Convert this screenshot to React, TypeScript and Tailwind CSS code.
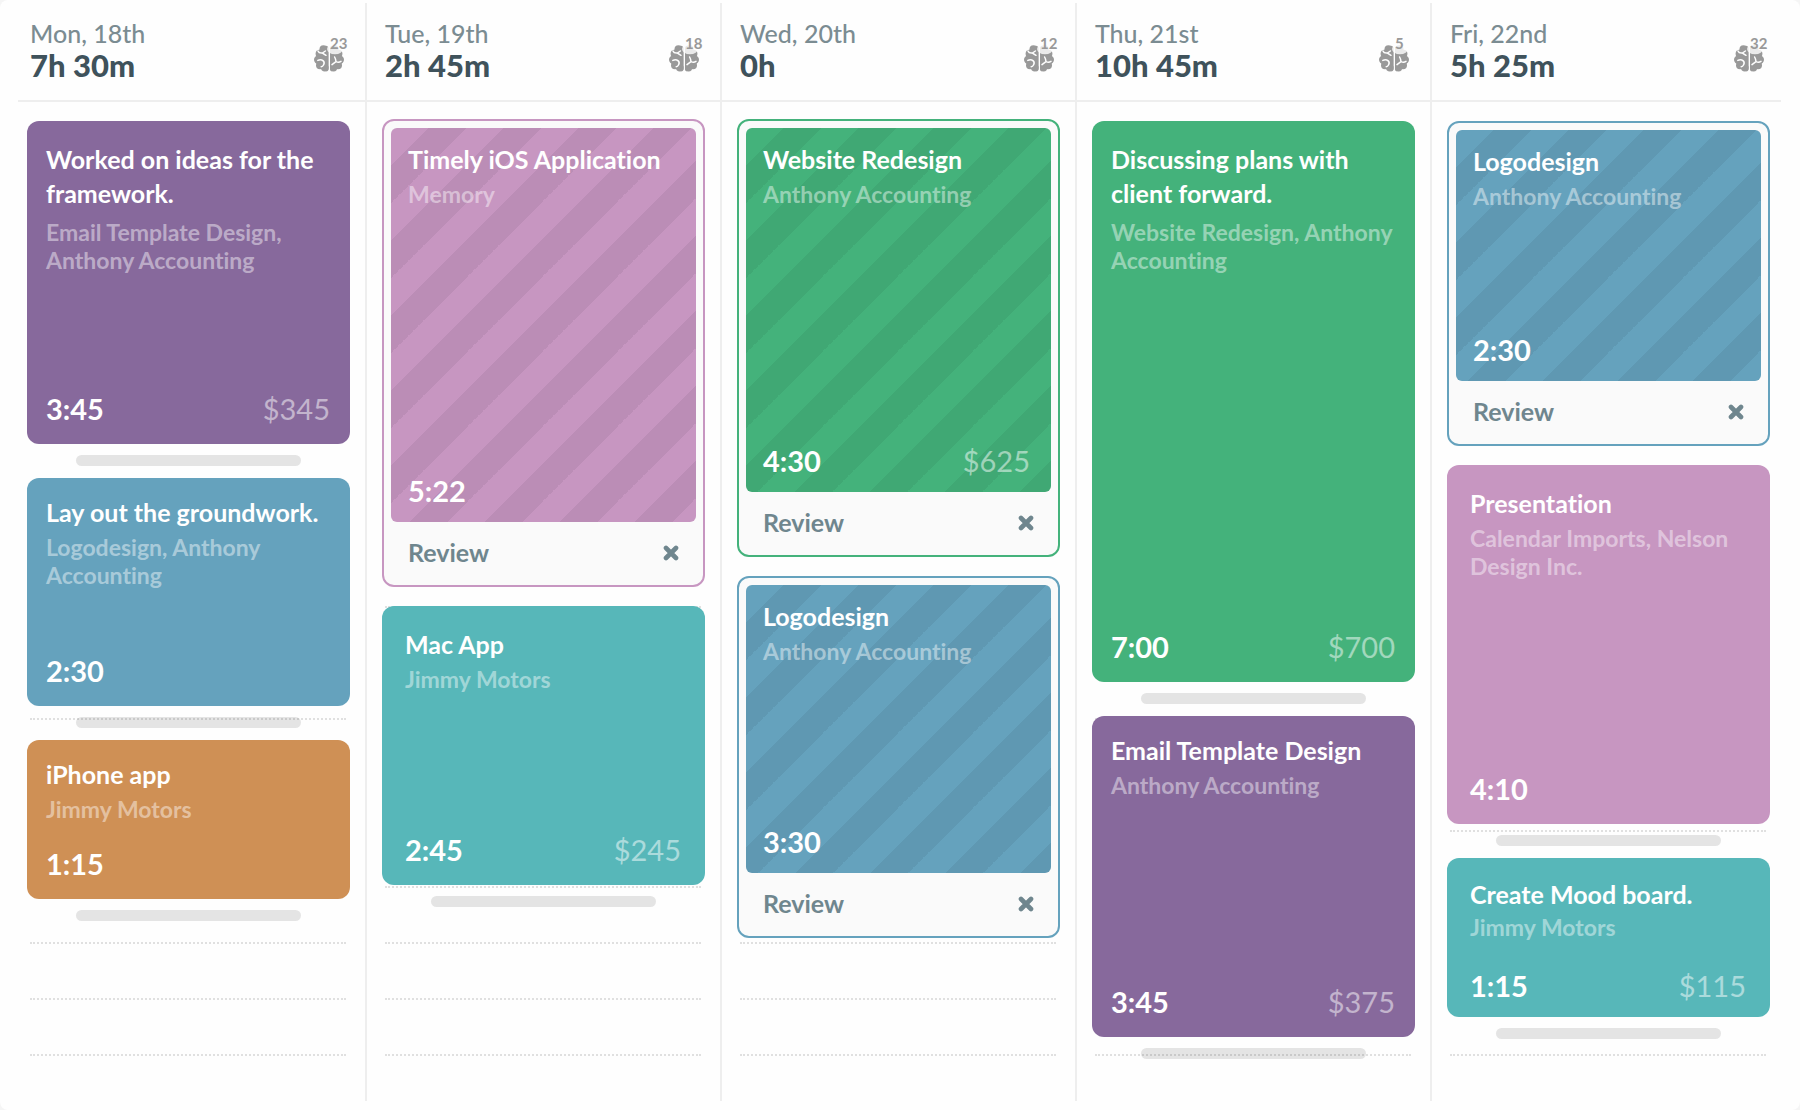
import clsx from "clsx"

type Color = "purple" | "blue" | "orange" | "pink" | "teal" | "green"

interface Entry {
  title: string
  project: string
  time: string
  amount?: string
  color: Color
  height: string
  review?: boolean
  roomy?: boolean
  inset?: boolean
  compact?: boolean
}

interface Day {
  date: string
  total: string
  memories: number
  top: string
  entries: Entry[]
}

const background: Record<Color, string> = {
  purple: "bg-[#87699c]",
  blue: "bg-[#65a2bd]",
  orange: "bg-[#cf9055]",
  pink: "bg-[#c796c1]",
  teal: "bg-[#57b7b9]",
  green: "bg-[#44b27b]",
}

const border: Record<Color, string> = {
  purple: "border-[#87699c]",
  blue: "border-[#65a2bd]",
  orange: "border-[#cf9055]",
  pink: "border-[#c796c1]",
  teal: "border-[#57b7b9]",
  green: "border-[#44b27b]",
}

const stripes =
  "bg-[linear-gradient(135deg,transparent_25%,rgba(0,0,0,0.06)_25%,rgba(0,0,0,0.06)_50%,transparent_50%,transparent_75%,rgba(0,0,0,0.06)_75%)] bg-[length:75px_75px]"

const days: Day[] = [
  {
    date: "Mon, 18th",
    total: "7h 30m",
    memories: 23,
    top: "pt-[19px]",
    entries: [
      {
        title: "Worked on ideas for the framework.",
        project: "Email Template Design, Anthony Accounting",
        time: "3:45",
        amount: "$345",
        color: "purple",
        height: "min-h-[323px]",
        roomy: true,
      },
      {
        title: "Lay out the groundwork.",
        project: "Logodesign, Anthony Accounting",
        time: "2:30",
        color: "blue",
        height: "min-h-[228px]",
      },
      { title: "iPhone app", project: "Jimmy Motors", time: "1:15", color: "orange", height: "min-h-[159px]" },
    ],
  },
  {
    date: "Tue, 19th",
    total: "2h 45m",
    memories: 18,
    top: "pt-[17px]",
    entries: [
      {
        title: "Timely iOS Application",
        project: "Memory",
        time: "5:22",
        color: "pink",
        height: "min-h-[468px]",
        review: true,
      },
      {
        title: "Mac App",
        project: "Jimmy Motors",
        time: "2:45",
        amount: "$245",
        color: "teal",
        height: "min-h-[279px]",
        roomy: true,
        inset: true,
      },
    ],
  },
  {
    date: "Wed, 20th",
    total: "0h",
    memories: 12,
    top: "pt-[17px]",
    entries: [
      {
        title: "Website Redesign",
        project: "Anthony Accounting",
        time: "4:30",
        amount: "$625",
        color: "green",
        height: "min-h-[438px]",
        review: true,
      },
      {
        title: "Logodesign",
        project: "Anthony Accounting",
        time: "3:30",
        color: "blue",
        height: "min-h-[362px]",
        review: true,
      },
    ],
  },
  {
    date: "Thu, 21st",
    total: "10h 45m",
    memories: 5,
    top: "pt-[19px]",
    entries: [
      {
        title: "Discussing plans with client forward.",
        project: "Website Redesign, Anthony Accounting",
        time: "7:00",
        amount: "$700",
        color: "green",
        height: "min-h-[561px]",
        roomy: true,
      },
      {
        title: "Email Template Design",
        project: "Anthony Accounting",
        time: "3:45",
        amount: "$375",
        color: "purple",
        height: "min-h-[321px]",
      },
    ],
  },
  {
    date: "Fri, 22nd",
    total: "5h 25m",
    memories: 32,
    top: "pt-[19px]",
    entries: [
      {
        title: "Logodesign",
        project: "Anthony Accounting",
        time: "2:30",
        color: "blue",
        height: "min-h-[325px]",
        review: true,
      },
      {
        title: "Presentation",
        project: "Calendar Imports, Nelson Design Inc.",
        time: "4:10",
        color: "pink",
        height: "min-h-[359px]",
        roomy: true,
        inset: true,
      },
      {
        title: "Create Mood board.",
        project: "Jimmy Motors",
        time: "1:15",
        amount: "$115",
        color: "teal",
        height: "min-h-[159px]",
        inset: true,
        compact: true,
      },
    ],
  },
]

function BrainIcon() {
  return (
    <svg width="30" height="27" viewBox="0 0 30 27" aria-hidden="true">
      <g fill="#999">
        <path d="M10 1.500C11.500 .2 14.600 .6 14.600 3.500V24C14.600 26.400 11.800 27 10.500 25.500L6 12Z" />
        <circle cx="9.400" cy="4.200" r="3.900" />
        <circle cx="5.600" cy="8.800" r="4" />
        <circle cx="4.200" cy="14.800" r="4.200" />
        <circle cx="6" cy="20.200" r="4" />
        <circle cx="10.800" cy="22.800" r="3.800" />
        <path d="M20 1.500C18.500 .2 16 .6 16 3.500V24C16 26.400 18.200 27 19.500 25.500L24 12Z" />
        <circle cx="20.600" cy="4.200" r="3.900" />
        <circle cx="24.400" cy="8.800" r="4" />
        <circle cx="25.800" cy="14.800" r="4.200" />
        <circle cx="24" cy="20.200" r="4" />
        <circle cx="19.600" cy="22.800" r="3.600" />
        <path d="M16 8H24V20H16Z" />
      </g>
      <g fill="none" stroke="#fefefe" strokeWidth="1.500" strokeLinecap="round">
        <path d="M4 6C4.800 8.200 6.800 8.200 8.400 8L12 10.300M8.400 8L11.400 6" />
        <path d="M3.800 15.400C8 13.400 11.400 16.600 9.600 19.800 9 21.200 8 21.800 7.200 21.800" />
        <path d="M20.600 12C21.500 13.600 22 14.600 22 16.600L18 19.600M22 16.600C24 17.600 25.600 17.300 27 16.400" />
      </g>
      <ellipse cx="21" cy="4" rx="8" ry="5.200" fill="#fefefe" fillOpacity="0.8" />
    </svg>
  )
}

function CloseIcon() {
  return (
    <svg width="16" height="16" viewBox="0 0 16 16" fill="none" stroke="currentColor" aria-hidden="true">
      <path d="M3 3L13 13M13 3L3 13" strokeWidth="4.600" strokeLinecap="round" />
    </svg>
  )
}

function EntryBody({ entry }: { entry: Entry }) {
  const twoLines = entry.title.length > 24
  return (
    <>
      <div>
        <h3 className="text-[25px] leading-[34px] font-bold">{entry.title}</h3>
        <p
          className={clsx(
            "text-[23px] leading-7 font-bold text-white/45",
            twoLines ? "mt-2" : entry.compact ? "mt-0.5" : "mt-1",
          )}
        >
          {entry.project}
        </p>
      </div>
      <div className="flex items-baseline justify-between text-[29px] leading-[34px]">
        <span className="font-bold">{entry.time}</span>
        {entry.amount && <span className="pr-1 text-white/50">{entry.amount}</span>}
      </div>
    </>
  )
}

function SolidEntry({ entry }: { entry: Entry }) {
  return (
    <>
      <article
        className={clsx(
          "flex flex-col justify-between rounded-xl text-white",
          background[entry.color],
          entry.height,
          entry.roomy ? "pt-[21px]" : entry.compact ? "pt-[19px]" : "pt-[17px]",
          entry.inset ? "pr-5 pl-[23px]" : "pr-4 pl-[19px]",
          entry.compact ? "pb-[14px]" : "pb-[18px]",
        )}
      >
        <EntryBody entry={entry} />
      </article>
      {/* drag handle under the entry */}
      <div className="mx-auto mt-[11px] mb-3 h-[11px] w-[225px] rounded-full bg-black/10" />
    </>
  )
}

function ReviewEntry({ entry }: { entry: Entry }) {
  return (
    <article
      className={clsx(
        "mb-[19px] flex flex-col rounded-xl border-2 bg-[#fafafa] px-[7px] pt-[7px]",
        border[entry.color],
        entry.height,
      )}
    >
      <div
        className={clsx(
          "flex flex-1 flex-col justify-between rounded-md px-[17px] pt-[14px] pb-[14px] text-white",
          background[entry.color],
          stripes,
        )}
      >
        <EntryBody entry={entry} />
      </div>
      <div className="flex h-[63px] items-center justify-between px-[17px] pb-0.5 text-[#6f868e]">
        <button type="button" className="text-[25px] font-bold">
          Review
        </button>
        <button type="button" aria-label="Dismiss">
          <CloseIcon />
        </button>
      </div>
    </article>
  )
}

function DayColumn({ day }: { day: Day }) {
  return (
    <section className="group flex flex-col border-r-2 border-[#eee] last:border-transparent">
      <header className="flex h-[99px] items-start justify-between border-b-2 border-[#eee] pt-[14px] pr-[21px] pl-[18px] group-first:ml-1.5 group-first:pl-3 group-last:mr-1 group-last:pr-[17px]">
        <div>
          <h2 className="text-[25px] leading-8 font-medium text-[#7b8c92]">{day.date}</h2>
          <p className="text-[31px] leading-8 font-black text-[#3f525b]">{day.total}</p>
        </div>
        <div className="relative mt-7">
          <BrainIcon />
          <span className="absolute -top-2.5 left-4 text-[15px] leading-4 font-bold text-[#999]">{day.memories}</span>
        </div>
      </header>

      <div className="grid flex-1">
        {/* hour lines run behind the entries */}
        <div className="col-start-1 row-start-1 mr-[19px] ml-[18px] pt-0.5">
          {Array.from({ length: 17 }, (_, i) => (
            <div key={i} className="h-14 border-b-2 border-dotted border-[#e0e0e0]" />
          ))}
        </div>
        <div className={clsx("z-10 col-start-1 row-start-1 px-[15px]", day.top)}>
          {day.entries.map((entry, i) =>
            entry.review ? <ReviewEntry key={i} entry={entry} /> : <SolidEntry key={i} entry={entry} />,
          )}
        </div>
      </div>
    </section>
  )
}

export default function App() {
  return (
    <div className="min-h-screen bg-neutral-100 font-[Lato,'Open_Sans',sans-serif] [font-variant-ligatures:none]">
      <main className="grid min-h-screen grid-cols-5 rounded-lg bg-[#fefefe] pt-[3px] pr-[13px] pb-[9px] pl-3">
        {days.map((day) => (
          <DayColumn key={day.date} day={day} />
        ))}
      </main>
    </div>
  )
}
